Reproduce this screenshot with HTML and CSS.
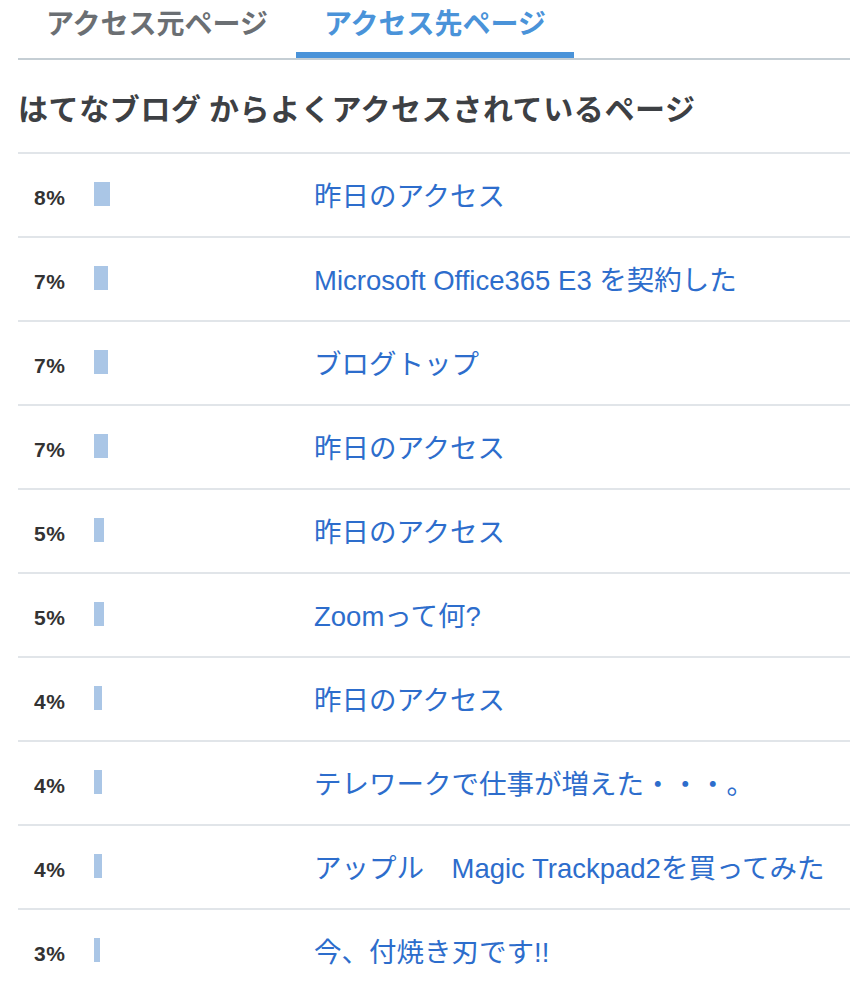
FILE: index.html
```html
<!DOCTYPE html>
<html lang="ja">
<head>
<meta charset="utf-8">
<link rel="stylesheet" href="styles.css">
</head>
<body>
<div class="wrap">
  <div class="tabs">
    <div class="tab">アクセス元ページ</div>
    <div class="tab active">アクセス先ページ</div>
  </div>
  <h2 class="title">はてなブログ からよくアクセスされているページ</h2>
  <ul class="list">
    <li class="row"><span class="pct">8%</span><span class="barcell"><span class="bar" style="width:16px"></span></span><a class="link">昨日のアクセス</a></li>
    <li class="row"><span class="pct">7%</span><span class="barcell"><span class="bar" style="width:14px"></span></span><a class="link">Microsoft Office365 E3 を契約した</a></li>
    <li class="row"><span class="pct">7%</span><span class="barcell"><span class="bar" style="width:14px"></span></span><a class="link">ブログトップ</a></li>
    <li class="row"><span class="pct">7%</span><span class="barcell"><span class="bar" style="width:14px"></span></span><a class="link">昨日のアクセス</a></li>
    <li class="row"><span class="pct">5%</span><span class="barcell"><span class="bar" style="width:10px"></span></span><a class="link">昨日のアクセス</a></li>
    <li class="row"><span class="pct">5%</span><span class="barcell"><span class="bar" style="width:10px"></span></span><a class="link">Zoomって何?</a></li>
    <li class="row"><span class="pct">4%</span><span class="barcell"><span class="bar" style="width:8px"></span></span><a class="link">昨日のアクセス</a></li>
    <li class="row"><span class="pct">4%</span><span class="barcell"><span class="bar" style="width:8px"></span></span><a class="link">テレワークで仕事が増えた・・・。</a></li>
    <li class="row"><span class="pct">4%</span><span class="barcell"><span class="bar" style="width:8px"></span></span><a class="link">アップル　Magic Trackpad2を買ってみた</a></li>
    <li class="row"><span class="pct">3%</span><span class="barcell"><span class="bar" style="width:6px"></span></span><a class="link">今、付焼き刃です!!</a></li>
  </ul>
</div>
</body>
</html>
```
FILE: styles.css
```css
html, body {
  margin: 0;
  padding: 0;
  background: #fff;
}
body {
  font-family: "Liberation Sans", "Noto Sans CJK JP", sans-serif;
  overflow: hidden;
}
.wrap {
  margin-left: 18px;
}
.tabs {
  display: flex;
  border-bottom: 2px solid #c5ced4;
  height: 58px;
}
.tab {
  width: 278px;
  text-align: center;
  font-size: 28px;
  font-weight: bold;
  color: #6b6f73;
  line-height: 44px;
  box-sizing: border-box;
  height: 58px;
  font-family: "Noto Sans CJK JP", sans-serif;
}
.tab.active {
  color: #4a93d9;
  border-bottom: 6px solid #4a93d9;
}
.title {
  margin: 0;
  font-family: "Noto Sans CJK JP", sans-serif;
  font-size: 30px;
  font-weight: bold;
  color: #3d4044;
  height: 92px;
  line-height: 94px;
  border-bottom: 2px solid #e1e5e9;
  letter-spacing: 0.6px;
  white-space: nowrap;
}
.list {
  list-style: none;
  margin: 0;
  padding: 0;
}
.row {
  display: flex;
  align-items: center;
  height: 82px;
  border-bottom: 2px solid #e1e5e9;
  padding-left: 16px;
}
.pct {
  width: 60px;
  font-family: "Liberation Sans", sans-serif;
  font-weight: bold;
  font-size: 21px;
  letter-spacing: 0.5px;
  color: #333;
  padding-top: 6px;
}
.barcell {
  width: 220px;
  display: flex;
  align-items: center;
}
.bar {
  display: block;
  height: 24px;
  background: #aac6e6;
  margin-top: -2px;
}
.link {
  font-size: 27.5px;
  color: #2d6dcc;
  text-decoration: none;
  white-space: nowrap;
  font-family: "Liberation Sans", "Noto Sans CJK JP", sans-serif;
  margin-top: -2px;
}
```
